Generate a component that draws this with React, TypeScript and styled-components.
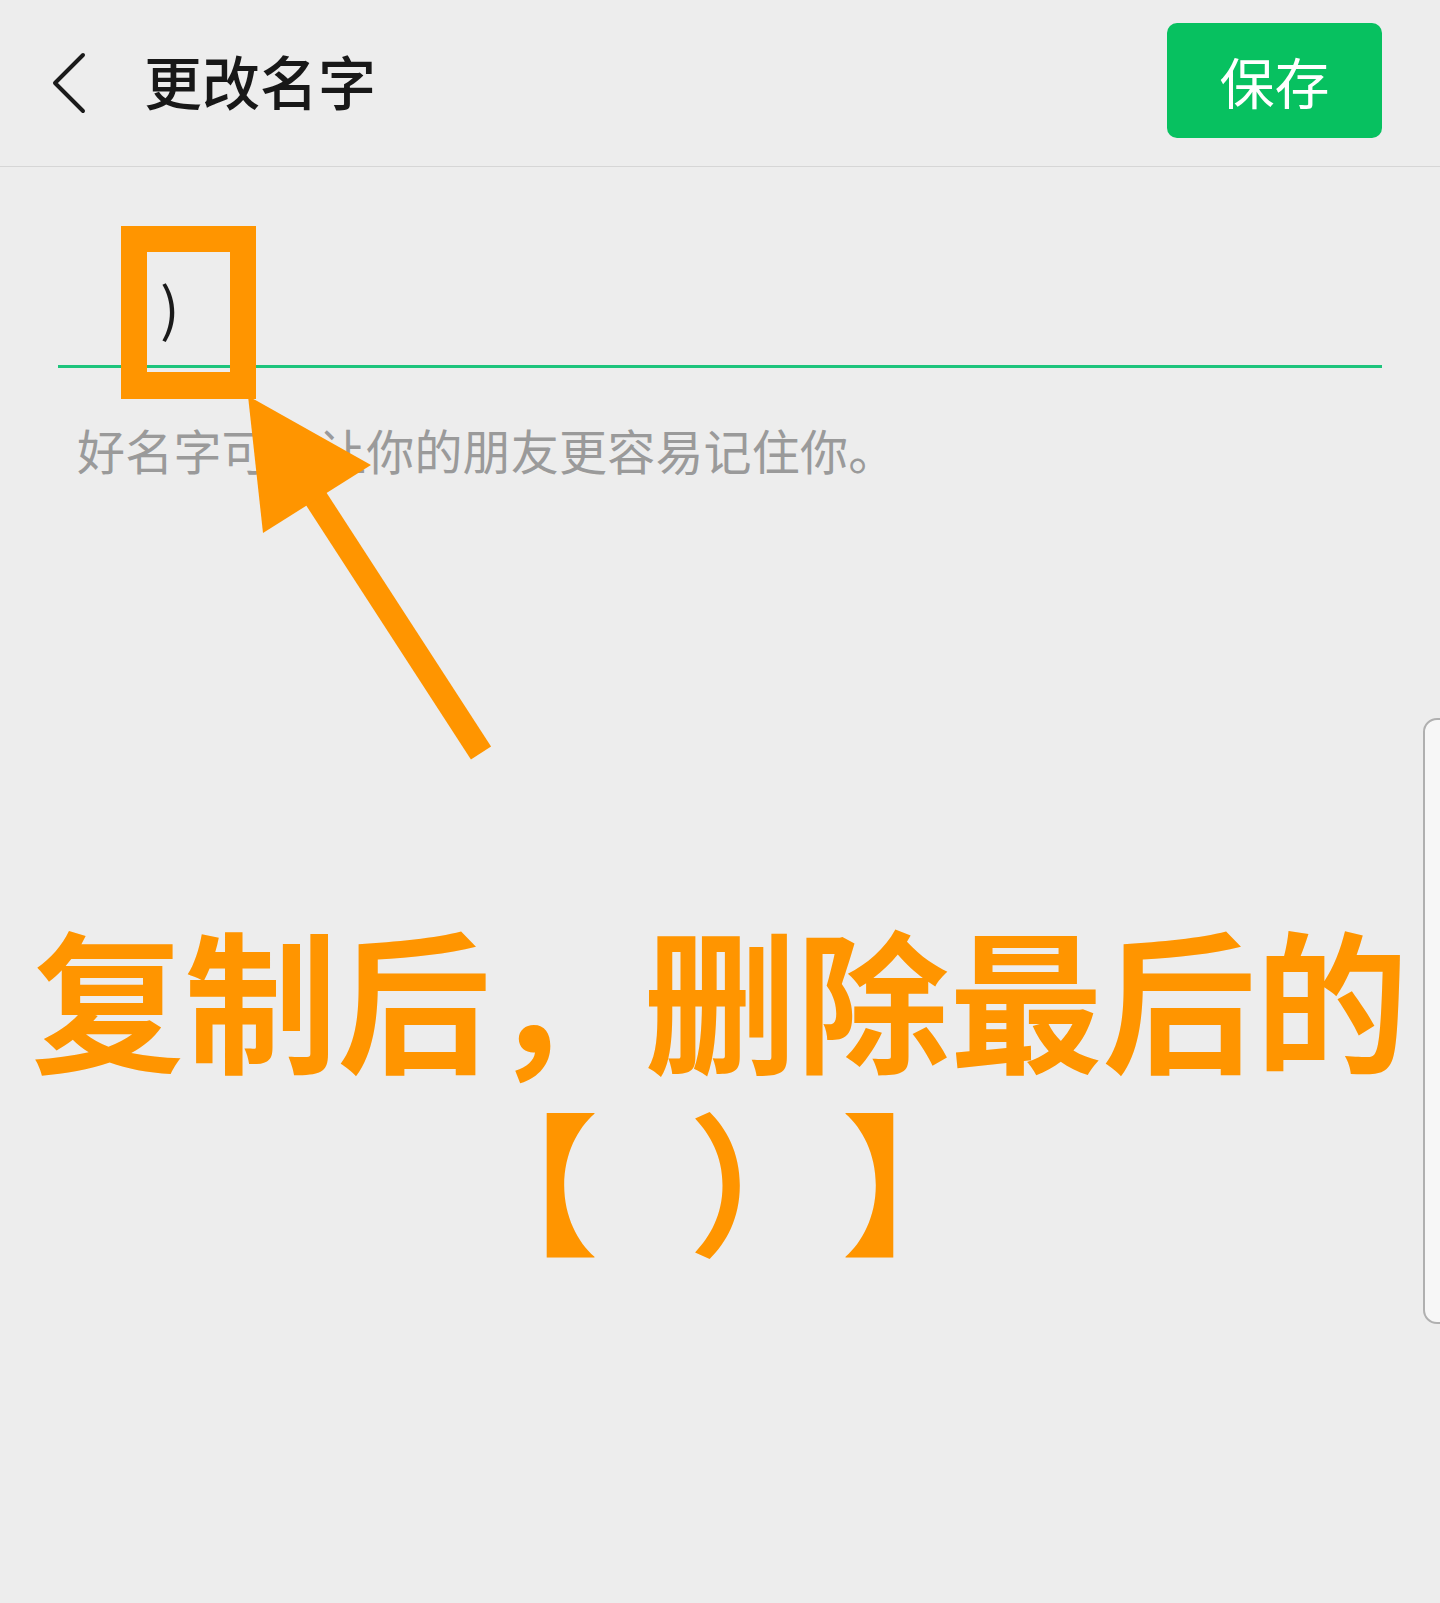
import React from "react";
import styled, { createGlobalStyle } from "styled-components";

const GlobalStyle = createGlobalStyle`
  html, body {
    margin: 0;
    padding: 0;
    background: #ededed;
  }
  body {
    font-family: "Noto Sans CJK SC", "Noto Sans", sans-serif;
    text-spacing-trim: space-all;
  }
`;

const Page = styled.div`
  position: relative;
  width: 1440px;
  min-height: 1603px;
  overflow: hidden;
  background: #ededed;
`;

const Header = styled.header`
  display: flex;
  align-items: center;
  height: 167px;
  box-sizing: border-box;
  padding: 0 58px 0 50px;
  border-bottom: 1px solid #d6d6d6;
`;

const BackIcon = styled.svg`
  width: 40px;
  height: 64px;
  flex: none;
  display: block;
`;

const Title = styled.h1`
  margin: 0 0 0 54px;
  padding-bottom: 7px;
  font-size: 58px;
  font-weight: 500;
  color: #181818;
  line-height: 1;
  flex: 1;
`;

const SaveButton = styled.button`
  width: 215px;
  height: 115px;
  margin-bottom: 6px;
  border: none;
  border-radius: 10px;
  background: #07c160;
  color: #ffffff;
  font-family: inherit;
  font-size: 55px;
  font-weight: 400;
  line-height: 1;
  padding: 0;
  display: flex;
  align-items: center;
  justify-content: center;
`;

const Main = styled.main`
  padding: 0 58px;
`;

const NameField = styled.div`
  height: 201px;
  box-sizing: border-box;
  border-bottom: 3px solid #1dc47c;
  display: flex;
  align-items: flex-end;
  padding: 0 0 30px 102px;
`;

const NameText = styled.span`
  font-size: 58px;
  line-height: 1;
  color: #1a1a1a;
`;

const Hint = styled.p`
  margin: 57px 0 0 19px;
  font-size: 48px;
  letter-spacing: 0.2px;
  line-height: 1;
  color: #9a9a9a;
`;

const BigNote = styled.div`
  margin-top: 432px;
  text-align: center;
  font-size: 153px;
  font-weight: 700;
  line-height: 182px;
  color: #ff9500;
`;

const NoteLine = styled.div<{ $wordGap?: number }>`
  white-space: pre;
  word-spacing: ${(p) => p.$wordGap ?? 0}px;
`;

const HighlightBox = styled.div`
  position: absolute;
  left: 121px;
  top: 226px;
  width: 135px;
  height: 173px;
  box-sizing: border-box;
  border: 26px solid #ff9500;
  border-bottom-width: 27px;
  pointer-events: none;
`;

const ArrowLayer = styled.svg`
  position: absolute;
  left: 0;
  top: 0;
  width: 1440px;
  height: 1603px;
  pointer-events: none;
`;

const EdgeHandle = styled.div`
  position: absolute;
  left: 1423px;
  top: 718px;
  width: 40px;
  height: 606px;
  box-sizing: border-box;
  border: 2px solid #b0b0b0;
  border-radius: 14px 0 0 14px;
  background: #f7f7f7;
`;

export default function App() {
  return (
    <>
      <GlobalStyle />
      <Page>
        <Header>
          <BackIcon viewBox="0 0 40 64">
            <polyline
              points="33,4 5,32 33,60"
              fill="none"
              stroke="#1a1a1a"
              strokeWidth="4"
              strokeLinecap="round"
              strokeLinejoin="round"
            />
          </BackIcon>
          <Title>更改名字</Title>
          <SaveButton>保存</SaveButton>
        </Header>
        <Main>
          <NameField>
            <NameText>)</NameText>
          </NameField>
          <Hint>好名字可以让你的朋友更容易记住你。</Hint>
        </Main>
        <BigNote>
          <NoteLine>复制后，删除最后的</NoteLine>
          <NoteLine $wordGap={55}>【 ）】</NoteLine>
        </BigNote>
        <HighlightBox />
        <ArrowLayer viewBox="0 0 1440 1603">
          <line
            x1="315"
            y1="497"
            x2="481"
            y2="753"
            stroke="#ff9500"
            strokeWidth="24"
          />
          <polygon points="248,396 371,465 263,533" fill="#ff9500" />
        </ArrowLayer>
        <EdgeHandle />
      </Page>
    </>
  );
}
